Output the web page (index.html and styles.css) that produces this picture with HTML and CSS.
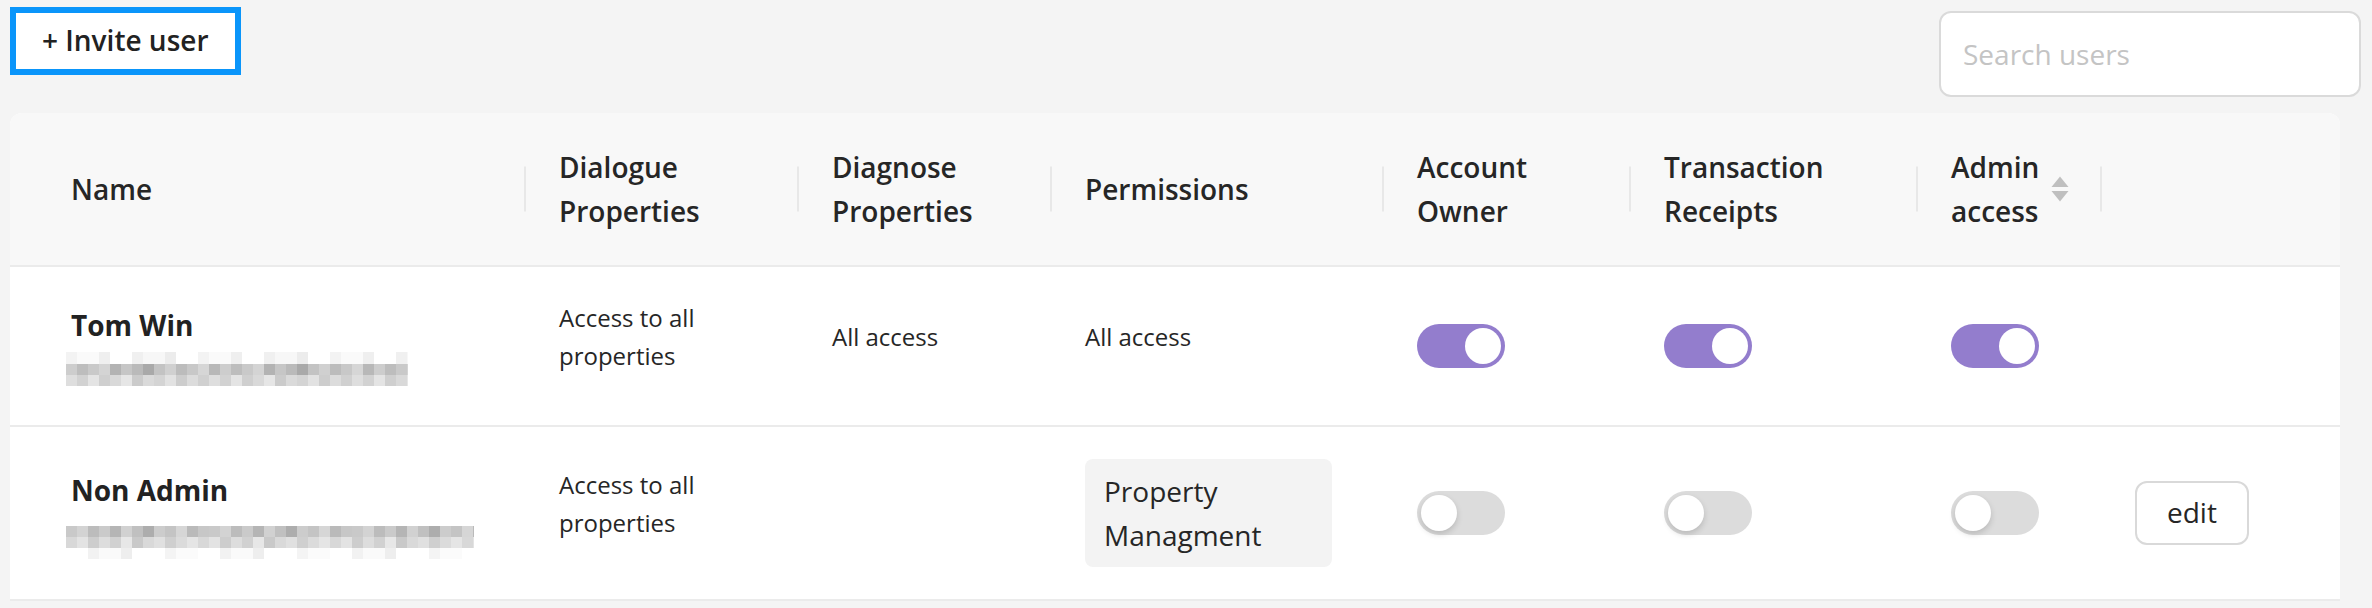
FILE: index.html
```html
<!DOCTYPE html>
<html lang="en">
<head>
<meta charset="utf-8">
<title>Users</title>
<link rel="stylesheet" href="styles.css">
</head>
<body>
<div class="page">
  <div class="toolbar">
    <button class="invite-btn" type="button">+ Invite user</button>
    <input class="search" type="text" placeholder="Search users">
  </div>
  <div class="card">
    <table class="users">
      <colgroup>
        <col class="c-name">
        <col class="c-dialogue">
        <col class="c-diagnose">
        <col class="c-perm">
        <col class="c-owner">
        <col class="c-receipts">
        <col class="c-admin">
        <col class="c-actions">
      </colgroup>
      <thead>
        <tr>
          <th class="first">Name</th>
          <th>Dialogue Properties</th>
          <th>Diagnose Properties</th>
          <th>Permissions</th>
          <th>Account Owner</th>
          <th>Transaction Receipts</th>
          <th>
            <div class="sorter-wrap">
              <span class="sorter-title">Admin access</span>
              <svg class="sorter" width="18" height="26" viewBox="0 0 18 26" aria-hidden="true">
                <path d="M9 0.5 L17.5 11 L0.5 11 Z" fill="#bfbfbf"/>
                <path d="M0.5 15 L17.5 15 L9 25.5 Z" fill="#bfbfbf"/>
              </svg>
            </div>
          </th>
          <th></th>
        </tr>
      </thead>
      <tbody>
        <tr>
          <td class="first">
            <div class="user-name top-pad">Tom Win</div>
            <div class="email email-r1"></div>
          </td>
          <td><div class="cell-text">Access to all properties</div></td>
          <td><div class="cell-text">All access</div></td>
          <td><div class="cell-text">All access</div></td>
          <td><span class="toggle on"><span class="knob"></span></span></td>
          <td><span class="toggle on"><span class="knob"></span></span></td>
          <td><span class="toggle on"><span class="knob"></span></span></td>
          <td></td>
        </tr>
        <tr>
          <td class="first">
            <div class="user-name">Non Admin</div>
            <div class="email email-r2"></div>
          </td>
          <td><div class="cell-text">Access to all properties</div></td>
          <td></td>
          <td><div class="tag">Property Managment</div></td>
          <td><span class="toggle off"><span class="knob"></span></span></td>
          <td><span class="toggle off"><span class="knob"></span></span></td>
          <td><span class="toggle off"><span class="knob"></span></span></td>
          <td><button class="edit-btn" type="button">edit</button></td>
        </tr>
      </tbody>
    </table>
  </div>
</div>
</body>
</html>
```
FILE: styles.css
```css
* { box-sizing: border-box; }
html, body { margin: 0; padding: 0; }
body {
  background: #f4f4f4;
  font-family: "Open Sans", "Noto Sans", sans-serif;
  color: #262626;
  width: 2372px;
  height: 608px;
  overflow: hidden;
}
.page { padding: 7px 11px 0 10px; }
.toolbar {
  display: flex;
  justify-content: space-between;
  align-items: flex-start;
}
.invite-btn {
  height: 68px;
  padding: 0 26px 2px;
  margin: 0;
  border: 6px solid #0a95fa;
  background: #fff;
  font-family: "Open Sans", sans-serif;
  font-weight: 600;
  font-size: 28px;
  line-height: 1;
  color: #222;
}
.search {
  margin: 4px 0 0;
  width: 422px;
  height: 86px;
  border: 2px solid #dadada;
  border-radius: 12px;
  padding: 0 22px;
  font-family: "Open Sans", sans-serif;
  font-size: 28px;
  color: #262626;
  background: #fff;
  outline: none;
}
.search::placeholder { color: #c4c4c4; }

.card {
  margin-top: 16px;
  width: 2330px;
  background: #fff;
  border-radius: 12px 12px 0 0;
  overflow: hidden;
}
.users {
  width: 100%;
  border-collapse: separate;
  border-spacing: 0;
  table-layout: fixed;
}
.c-name { width: 516px; }
.c-dialogue { width: 273px; }
.c-diagnose { width: 253px; }
.c-perm { width: 332px; }
.c-owner { width: 247px; }
.c-receipts { width: 287px; }
.c-admin { width: 184px; }
.c-actions { width: 238px; }

.users th {
  position: relative;
  background: #f8f8f8;
  font-weight: 600;
  font-size: 28px;
  line-height: 44px;
  text-align: left;
  padding: 32px 33px;
  border-bottom: 2px solid #ebebeb;
  vertical-align: middle;
  color: #262626;
}
.users th:not(:last-child)::before {
  content: "";
  position: absolute;
  right: 0;
  top: 50%;
  width: 2px;
  height: 45px;
  transform: translateY(-50%);
  background: #e8e8e8;
}
.users td {
  padding: 32px 33px;
  border-bottom: 2px solid #ebebeb;
  vertical-align: middle;
  font-size: 24px;
  line-height: 1.5715;
  color: #262626;
}
.users .first { padding-left: 61px; }

.sorter-wrap {
  display: flex;
  align-items: center;
}
.sorter-title { flex: 1; }
.sorter { display: block; flex: none; }

.cell-text { margin-bottom: 18px; }

.user-name {
  font-size: 28px;
  line-height: 44px;
  font-weight: 700;
  color: #222;
}
.user-name.top-pad { padding-top: 4px; }

.email {
  margin-left: -5px;
  background-repeat: no-repeat;
}
.email-r1 {
  width: 342px;
  height: 34px;
  margin-top: 5px;
  margin-bottom: 7px;
  background-image:
    repeating-linear-gradient(90deg, #f3f3f3 0 11px, #fafafa 11px 33px, #efefef 33px 44px, #ffffff 44px 66px, #f0f0f0 66px 77px, #f7f7f7 77px 99px, #ececec 99px 110px, #ffffff 110px 132px),
    repeating-linear-gradient(90deg, #cdcdcd 0 11px, #bdbdbd 11px 22px, #c9c9c9 22px 33px, #d4d4d4 33px 44px, #b3b3b3 44px 55px, #c6c6c6 55px 66px, #bababa 66px 77px, #a9a9a9 77px 88px, #c3c3c3 88px 99px, #d0d0d0 99px 110px, #bcbcbc 110px 121px, #c8c8c8 121px 132px, #d6d6d6 132px 143px, #b8b8b8 143px 154px),
    repeating-linear-gradient(90deg, #dedede 0 11px, #d2d2d2 11px 22px, #e4e4e4 22px 33px, #cfcfcf 33px 44px, #d9d9d9 44px 55px, #e6e6e6 55px 66px, #cbcbcb 66px 77px, #dadada 77px 88px, #d4d4d4 88px 99px, #e2e2e2 99px 110px, #cdcdcd 110px 121px, #dcdcdc 121px 132px, #d0d0d0 132px 143px);
  background-size: 100% 12px, 100% 11px, 100% 11px;
  background-position: 0 0, 0 12px, 0 23px;
}
.email-r2 {
  width: 408px;
  height: 33px;
  margin-top: 14px;
  background-image:
    repeating-linear-gradient(90deg, #c9c9c9 0 11px, #d3d3d3 11px 22px, #bcbcbc 22px 33px, #cacaca 33px 44px, #b5b5b5 44px 55px, #d1d1d1 55px 66px, #c0c0c0 66px 77px, #adadad 77px 88px, #cccccc 88px 99px, #c4c4c4 99px 110px, #d6d6d6 110px 121px, #bababa 121px 132px, #c7c7c7 132px 143px),
    repeating-linear-gradient(90deg, #d8d8d8 0 11px, #e3e3e3 11px 22px, #cdcdcd 22px 33px, #dddddd 33px 44px, #d1d1d1 44px 55px, #e7e7e7 55px 66px, #c9c9c9 66px 77px, #d9d9d9 77px 88px, #e0e0e0 88px 99px, #cfcfcf 99px 110px, #dbdbdb 110px 121px, #e5e5e5 121px 132px),
    repeating-linear-gradient(90deg, #ffffff 0 22px, #f2f2f2 22px 33px, #fafafa 33px 55px, #eeeeee 55px 66px, #ffffff 66px 99px, #f4f4f4 99px 110px, #fbfbfb 110px 132px);
  background-size: 100% 11px, 100% 11px, 100% 11px;
  background-position: 0 0, 0 11px, 0 22px;
}

.tag {
  width: 247px;
  padding: 10px 19px;
  background: #f3f3f3;
  border-radius: 8px;
  font-size: 28px;
  line-height: 44px;
  color: #262626;
}

.toggle {
  display: flex;
  align-items: center;
  width: 88px;
  height: 44px;
  padding: 4px;
  border-radius: 22px;
}
.toggle.on {
  background: #937dcd;
  justify-content: flex-end;
}
.toggle.off {
  background: #dcdcdc;
  justify-content: flex-start;
}
.knob {
  display: block;
  width: 36px;
  height: 36px;
  border-radius: 50%;
  background: #fff;
}
.toggle.off .knob {
  box-shadow: 0 3px 6px rgba(0, 0, 0, 0.16);
}

.edit-btn {
  height: 64px;
  padding: 0 30px 2px;
  margin: 0;
  border: 2px solid #d9d9d9;
  border-radius: 12px;
  background: #fff;
  font-family: "Open Sans", sans-serif;
  font-size: 28px;
  line-height: 1;
  color: #262626;
}
```
